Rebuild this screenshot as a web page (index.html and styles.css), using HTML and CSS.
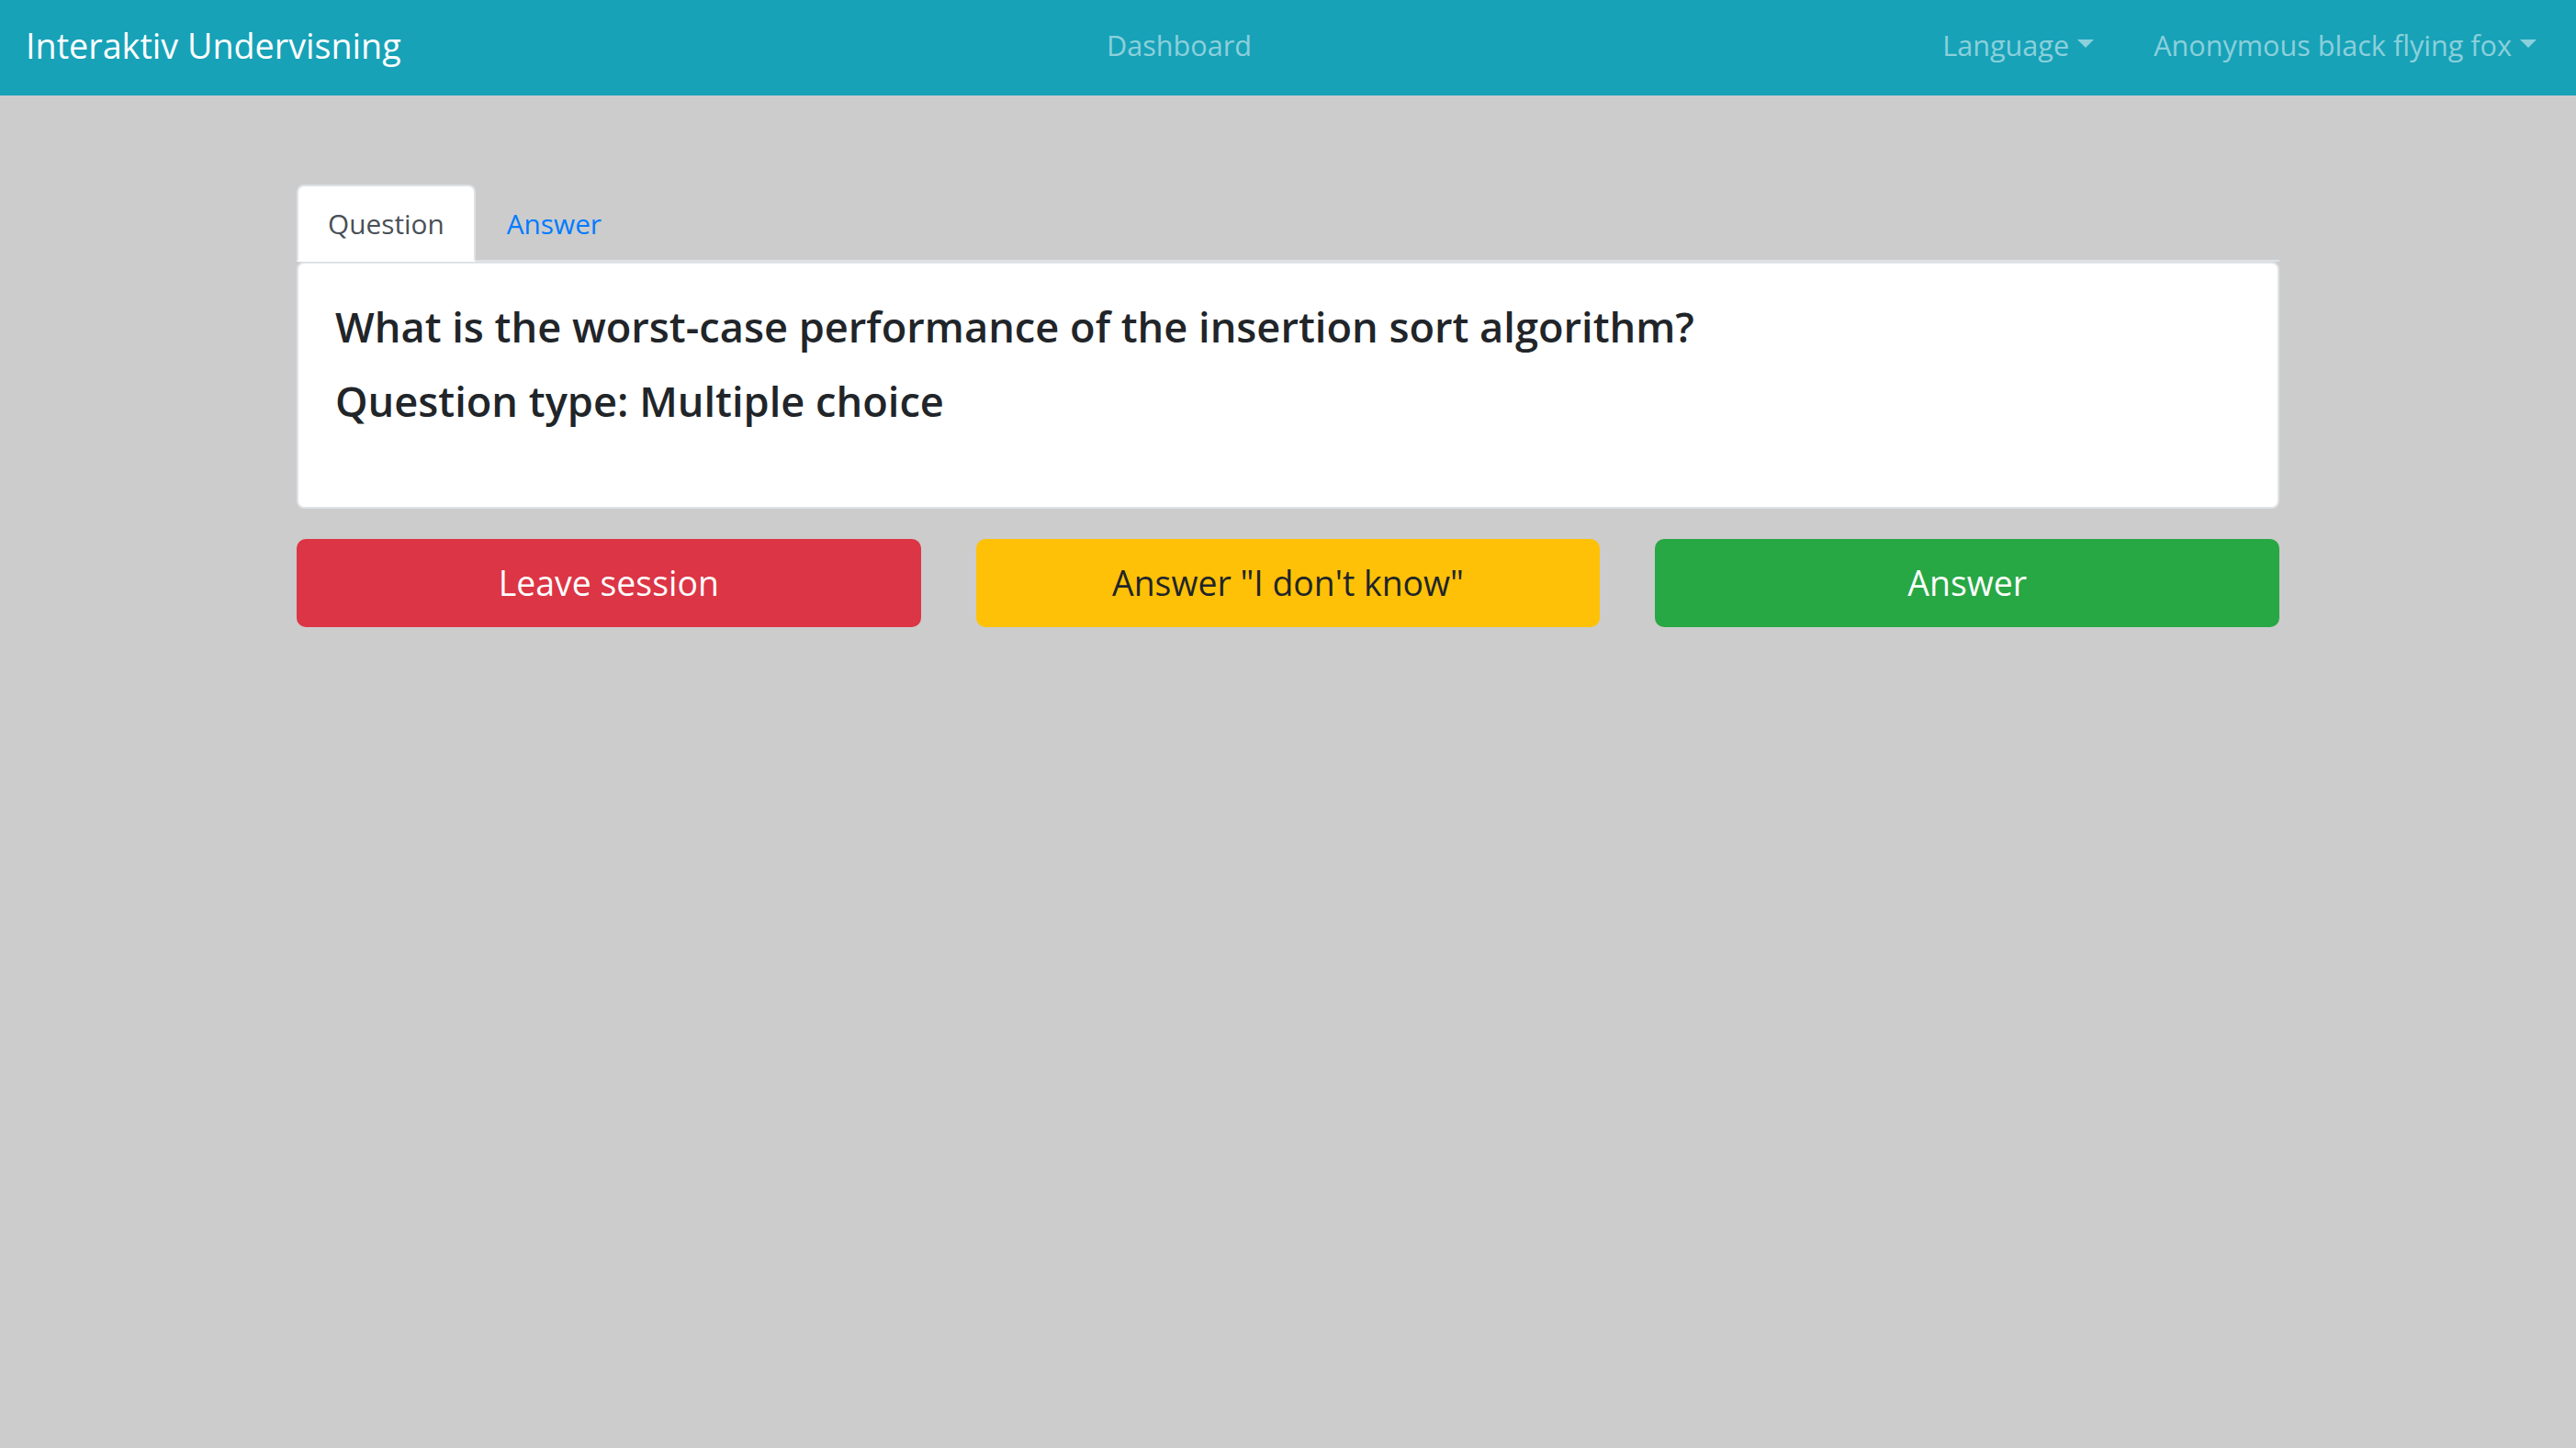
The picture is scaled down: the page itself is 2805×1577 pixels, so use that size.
FILE: index.html
```html
<!DOCTYPE html>
<html lang="en">
<head>
<meta charset="utf-8">
<title>Interaktiv Undervisning</title>
<link rel="stylesheet" href="styles.css">
</head>
<body>
<nav class="navbar">
  <a class="brand" href="#">Interaktiv Undervisning</a>
  <ul class="nav nav-center">
    <li><a class="nav-link" href="#">Dashboard</a></li>
  </ul>
  <ul class="nav nav-right">
    <li><a class="nav-link" href="#">Language<span class="caret"></span></a></li>
    <li><a class="nav-link" href="#">Anonymous black flying fox<span class="caret"></span></a></li>
  </ul>
</nav>

<main class="container">
  <ul class="tabs">
    <li><a class="tab active" href="#">Question</a></li>
    <li><a class="tab" href="#">Answer</a></li>
  </ul>
  <section class="card">
    <h4 class="q-title">What is the worst-case performance of the insertion sort algorithm?</h4>
    <h4 class="q-type">Question type: Multiple choice</h4>
  </section>
  <div class="actions">
    <button class="btn btn-danger">Leave session</button>
    <button class="btn btn-warning">Answer "I don't know"</button>
    <button class="btn btn-success">Answer</button>
  </div>
</main>
</body>
</html>
```
FILE: styles.css
```css
* { box-sizing: border-box; }

html, body {
  margin: 0;
  padding: 0;
}

body {
  background: #cccccc;
  font-family: "Open Sans", "Noto Sans", "Liberation Sans", sans-serif;
  color: #212529;
  min-height: 100vh;
}

a { text-decoration: none; }

ul { list-style: none; margin: 0; padding: 0; }

/* ---------- navbar ---------- */
.navbar {
  display: flex;
  align-items: flex-start;
  height: 104px;
  padding: 0 27px 0 28px;
  background: #17a2b8;
}

.brand {
  margin-top: 20px;
  margin-right: 32px;
  font-size: 37.7px;
  line-height: 60px;
  color: #ffffff;
  white-space: nowrap;
}

.nav {
  display: flex;
  margin-top: 25px;
}

.nav-center {
  flex: 1;
  justify-content: center;
}

.nav-right {
  gap: 33px;
}

.nav-link {
  display: block;
  padding: 0 16px;
  font-size: 30.6px;
  line-height: 48px;
  color: rgba(255, 255, 255, 0.5);
  white-space: nowrap;
}

.caret {
  display: inline-block;
  width: 0;
  height: 0;
  margin-left: 9px;
  vertical-align: 9px;
  border-top: 9px solid rgba(255, 255, 255, 0.5);
  border-left: 9px solid transparent;
  border-right: 9px solid transparent;
}

/* ---------- content ---------- */
.container {
  width: 2159px;
  margin: 0 auto;
  padding-top: 97px;
}

.tabs {
  display: flex;
  border-bottom: 2px solid #dee2e6;
}

.tab {
  display: block;
  margin-bottom: -2px;
  padding: 17px 32px 15px;
  font-size: 29.8px;
  line-height: 48px;
  color: #007bff;
  border: 2px solid transparent;
  border-radius: 8px 8px 0 0;
}

.tab.active {
  color: #495057;
  background: #ffffff;
  border-color: #dee2e6 #dee2e6 #ffffff;
}

.card {
  padding: 40px 40px 42px;
  background: #ffffff;
  border: 2px solid #dee2e6;
  border-radius: 8px;
}

.card h4 {
  margin: 0;
  font-size: 45.2px;
  font-weight: 600;
  line-height: 57.6px;
  color: #212529;
}

.card .q-title { margin-bottom: 23px; }
.card .q-type { margin-bottom: 45px; }

/* ---------- buttons ---------- */
.actions {
  display: grid;
  grid-template-columns: repeat(3, 1fr);
  column-gap: 60px;
  margin-top: 33px;
}

.btn {
  display: block;
  width: 100%;
  margin: 0;
  padding: 16px 32px;
  font-family: inherit;
  font-size: 37.4px;
  line-height: 60px;
  text-align: center;
  border: 2px solid transparent;
  border-radius: 10px;
  cursor: pointer;
}

.btn-danger {
  color: #ffffff;
  background: #dc3545;
  border-color: #dc3545;
}

.btn-warning {
  color: #212529;
  background: #ffc107;
  border-color: #ffc107;
}

.btn-success {
  color: #ffffff;
  background: #28a745;
  border-color: #28a745;
}
```
